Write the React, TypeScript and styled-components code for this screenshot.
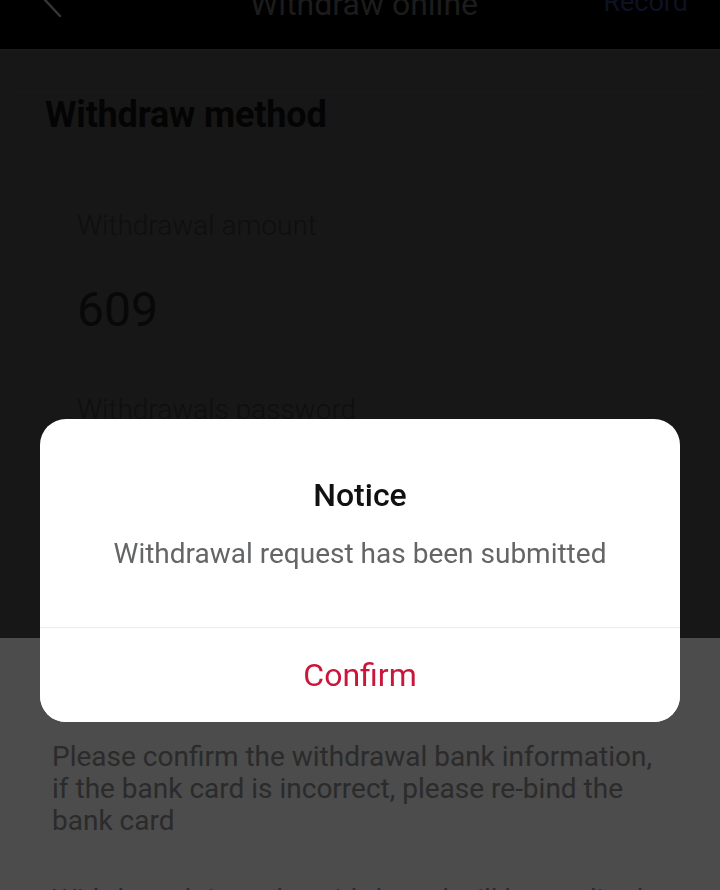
import React from "react";
import styled, { createGlobalStyle } from "styled-components";

const GlobalStyle = createGlobalStyle`
  html, body { margin: 0; padding: 0; background: #ffffff; }
  body { font-family: Roboto, "Noto Sans", "Liberation Sans", sans-serif; }
  * { box-sizing: border-box; }
`;

const Page = styled.div`
  width: 720px;
  height: 890px;
  overflow: hidden;
  display: flex;
  flex-direction: column;
`;

const Header = styled.header`
  height: 50px;
  flex: none;
  background: #000;
  border-bottom: 1px solid #5a5a5a;
  display: grid;
  grid-template-columns: 1fr auto 1fr;
  align-items: start;
  overflow: hidden;
  padding: 0 32px 0 40px;
`;

const BackButton = styled.div`
  margin-top: -17px;
  width: 24px;
  height: 34px;
  display: flex;
`;

const Title = styled.h1`
  margin: -14px 0 0;
  font-size: 32px;
  line-height: 36px;
  font-weight: 400;
  color: #5e5e5e;
`;

const HeaderLink = styled.div`
  justify-self: end;
  margin-top: -16px;
  font-size: 27px;
  line-height: 36px;
  color: #2a3c78;
`;

const TopSection = styled.section`
  height: 588px;
  flex: none;
  background: #4d4d4d;
  padding-top: 42px;
`;

const MethodCard = styled.div`
  margin: 0 10px;
  height: 78px;
  border: 1px solid #545454;
  padding: 0 34px;
`;

const MethodTitle = styled.h2`
  margin: 0;
  font-size: 36px;
  line-height: 44px;
  font-weight: 700;
  color: #0f0f0f;
  letter-spacing: -0.2px;
`;

const Field = styled.div<{ $gap: number }>`
  padding-left: 77px;
  margin-top: ${(p) => p.$gap}px;
`;

const FieldLabel = styled.div`
  font-size: 28px;
  line-height: 36px;
  font-weight: 300;
  color: #333;
`;

const Amount = styled.div`
  font-size: 48px;
  line-height: 56px;
  font-weight: 400;
  color: #1c1c1c;
`;

const BottomSection = styled.section`
  flex: 1;
  background: #fdfdfd;
  padding: 103px 52px 0;
`;

const Tip = styled.p<{ $gap?: number }>`
  margin: ${(p) => p.$gap ?? 0}px 0 0;
  font-size: 28px;
  line-height: 32px;
  color: #8f8f8f;
`;

const Overlay = styled.div`
  position: fixed;
  inset: 0;
  background: rgba(0, 0, 0, 0.7);
  display: flex;
  justify-content: center;
  align-items: flex-start;
  padding-top: 419px;
`;

const Dialog = styled.div`
  width: 640px;
  background: #fff;
  border-radius: 26px;
  overflow: hidden;
`;

const DialogBody = styled.div`
  padding: 58px 24px 55px;
  text-align: center;
  border-bottom: 1px solid #ededed;
`;

const DialogTitle = styled.h3`
  margin: 0;
  font-size: 32px;
  line-height: 36px;
  font-weight: 500;
  color: #111;
`;

const DialogMessage = styled.p`
  margin: 23px 0 0;
  font-size: 28px;
  line-height: 36px;
  color: #646566;
`;

const ConfirmButton = styled.button`
  width: 100%;
  height: 94px;
  border: none;
  background: #fff;
  display: flex;
  align-items: center;
  justify-content: center;
  font-family: inherit;
  font-size: 32px;
  color: #c8173a;
  padding: 0;
`;

export default function App() {
  return (
    <>
      <GlobalStyle />
      <Page>
        <Header>
          <BackButton>
            <svg width="24" height="34" viewBox="0 0 24 34" fill="none">
              <path d="M20 1 L5 17 L20 33" stroke="#b4b4b4" strokeWidth="2.4" strokeLinecap="round" strokeLinejoin="round" />
            </svg>
          </BackButton>
          <Title>Withdraw online</Title>
          <HeaderLink>Record</HeaderLink>
        </Header>
        <TopSection>
          <MethodCard>
            <MethodTitle>Withdraw method</MethodTitle>
          </MethodCard>
          <Field $gap={38}>
            <FieldLabel>Withdrawal amount</FieldLabel>
          </Field>
          <Field $gap={38}>
            <Amount>609</Amount>
          </Field>
          <Field $gap={54}>
            <FieldLabel>Withdrawals password</FieldLabel>
          </Field>
        </TopSection>
        <BottomSection>
          <Tip>
            Please confirm the withdrawal bank information, if the bank card is incorrect, please re-bind the bank card
          </Tip>
          <Tip $gap={47}>
            Withdrawal time: the withdrawal will be credited within 24 hours
          </Tip>
        </BottomSection>
      </Page>
      <Overlay>
        <Dialog>
          <DialogBody>
            <DialogTitle>Notice</DialogTitle>
            <DialogMessage>Withdrawal request has been submitted</DialogMessage>
          </DialogBody>
          <ConfirmButton>Confirm</ConfirmButton>
        </Dialog>
      </Overlay>
    </>
  );
}
